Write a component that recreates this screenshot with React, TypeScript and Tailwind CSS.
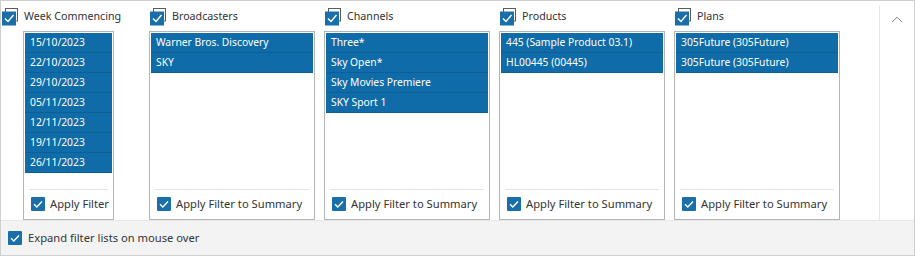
import React from "react";

const FONT = { fontFamily: '"Segoe UI", "Noto Sans", "Open Sans", sans-serif' };

function HeaderCheck() {
  return (
    <svg width="20" height="20" viewBox="0 0 20 20" className="shrink-0">
      <rect x="4.5" y="1.5" width="12" height="12.5" fill="white" stroke="#5a5a5a" strokeWidth="1" />
      <rect x="1" y="4.5" width="14" height="14" fill="#1a6fab" />
      <path d="M4 11.5 L7 14.5 L12.5 8" fill="none" stroke="white" strokeWidth="1.4" />
    </svg>
  );
}

function SmallCheck() {
  return (
    <svg width="14" height="14" viewBox="0 0 14 14" className="shrink-0">
      <rect x="0" y="0" width="14" height="14" rx="1" fill="#1a6fab" />
      <path d="M3 7.2 L5.8 10 L11 4.5" fill="none" stroke="white" strokeWidth="1.4" />
    </svg>
  );
}

type Col = { title: string; items: string[]; apply: string };

const cols: Col[] = [
  { title: "Broadcasters", items: ["Warner Bros. Discovery", "SKY"], apply: "Apply Filter to Summary" },
  { title: "Channels", items: ["Three*", "Sky Open*", "Sky Movies Premiere", "SKY Sport 1"], apply: "Apply Filter to Summary" },
  { title: "Products", items: ["445 (Sample Product 03.1)", "HL00445 (00445)"], apply: "Apply Filter to Summary" },
  { title: "Plans", items: ["305Future (305Future)", "305Future (305Future)"], apply: "Apply Filter to Summary" },
];

const weeks = ["15/10/2023", "22/10/2023", "29/10/2023", "05/11/2023", "12/11/2023", "19/11/2023", "26/11/2023"];

function ListBox({ items, apply, width }: { items: string[]; apply: string; width: string }) {
  return (
    <div className={`${width} h-[189px] border border-[#b4b4b4] bg-white flex flex-col`}>
      <div className="flex-1 p-px flex flex-col">
        {items.map((it, i) => (
          <div
            key={i}
            className="h-[20px] bg-[#0f6ca8] border-b border-[#0c5f96] text-white text-[10.3px] leading-[19px] pl-[5px] whitespace-nowrap overflow-hidden"
          >
            {it}
          </div>
        ))}
      </div>
      <div className="mx-[5px] border-t border-[#e3e3e3] h-[29px] flex items-center gap-[5px] pl-[2px] mb-[1px]">
        <SmallCheck />
        <span className="text-[11.2px] text-[#333] whitespace-nowrap">{apply}</span>
      </div>
    </div>
  );
}

export default function App() {
  return (
    <div style={FONT} className="w-[915px] h-[256px] border border-[#cfcfcf] bg-white flex flex-col overflow-hidden">
      <div className="h-[219px] flex">
        <div className="w-[148px] flex flex-col">
          <div className="h-[30px] flex items-center gap-[3px] pt-[1px]">
            <HeaderCheck />
            <span className="text-[10.7px] text-[#333]">Week Commencing</span>
          </div>
          <div className="pl-[22px]">
            <ListBox items={weeks} apply="Apply Filter" width="w-[91px]" />
          </div>
        </div>
        {cols.map((c) => (
          <div key={c.title} className="w-[175px] flex flex-col">
            <div className="h-[30px] flex items-center gap-[3px] pt-[1px]">
              <HeaderCheck />
              <span className="text-[10.7px] text-[#333]">{c.title}</span>
            </div>
            <ListBox items={c.items} apply={c.apply} width="w-[166px]" />
          </div>
        ))}
        <div className="flex-1 flex justify-end">
          <div className="w-[35px] mt-[5px] border-l border-[#e6e6e6] flex justify-center pt-[10px]">
            <svg width="12" height="7" viewBox="0 0 12 7">
              <path d="M1 6 L6 1.2 L11 6" fill="none" stroke="#8a8a8a" strokeWidth="1" />
            </svg>
          </div>
        </div>
      </div>
      <div className="flex-1 bg-[#f3f3f3] border-t border-[#e8e8e8] flex items-center gap-[6px] pl-[7px]">
        <SmallCheck />
        <span className="text-[11.2px] text-[#333]">Expand filter lists on mouse over</span>
      </div>
    </div>
  );
}
